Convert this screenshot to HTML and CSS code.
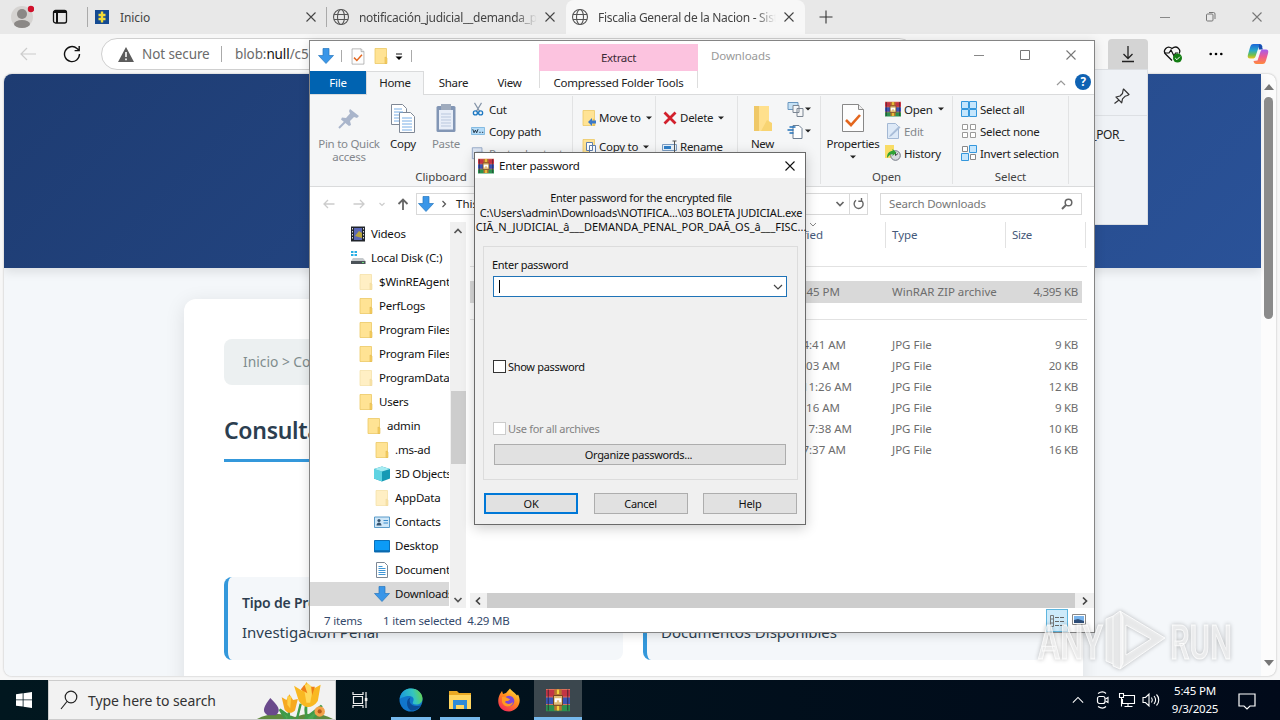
FILE: index.html
```html
<!DOCTYPE html>
<html lang="es">
  <head>
    <meta charset="UTF-8" />
    <title>Fiscalia General de la Nacion</title>
    <link rel="stylesheet" href="styles.css">
  </head>
  <body>
    <!-- shared icons -->
    <svg class="sprite">
      <symbol id="folder" viewBox="0 0 16 16">
        <path d="M2 .5h11.500v15H2z" fill="#ffe394" stroke="#ecc964" stroke-width=".8" />
        <path d="M12 9l2 1v5.500h-2z" fill="#f7cf62" stroke="#e0b84f" stroke-width=".6" />
      </symbol>
      <symbol id="down" viewBox="0 0 16 16">
        <path d="M5 .5h6v7h4.500L8 15.500.5 7.500H5z" fill="#3a96e8" stroke="#2677bd" stroke-width=".7" />
      </symbol>
      <symbol id="rar" viewBox="0 0 16 16">
        <path d="M0 1h16v5H0z" fill="#c23545" />
        <path d="M0 6h16v5H0z" fill="#3a55b5" />
        <path d="M0 11h16v4.500H0z" fill="#2c9150" />
        <path d="M0 1h16M0 6h16M0 11h16" stroke="#e4755f" stroke-width=".6" />
        <path d="M1.500 1v14M14.500 1v14" stroke="#2b1b2b" stroke-width=".5" />
        <path d="M5.500 1h5v14h-5z" fill="#b8742f" />
        <path d="M5 5h6v6.500H5z" fill="#e0bd78" stroke="#6c3d1b" stroke-width=".6" />
        <path d="M6.500 9.500V7.500h3v2" fill="none" stroke="#fff" stroke-width="1.400" />
        <path d="M8 1v3M8 12v3" stroke="#f4d23c" stroke-width="1.500" />
      </symbol>
      <symbol id="globe" viewBox="0 0 18 18">
        <g fill="none" stroke="#555" stroke-width="1.100">
          <circle cx="9" cy="9" r="7.500" />
          <ellipse cx="9" cy="9" rx="3.500" ry="7.500" />
          <path d="M2 6.500h14M2 11.500h14" />
        </g>
      </symbol>
      <symbol id="close" viewBox="0 0 12 12">
        <path d="M1.500 1.500l9 9M10.500 1.500l-9 9" fill="none" stroke="currentColor" stroke-width="1.100" />
      </symbol>
      <symbol id="page-check" viewBox="0 0 24 30">
        <path d="M1.500 1.500h16l5 5v22h-21z" fill="#fdfdfd" stroke="#888" />
        <path d="M17.500 1.500v5h5" fill="#eee" stroke="#888" />
        <path d="M5 17l5 5L19 12" fill="none" stroke="#e3661e" stroke-width="2.600" />
      </symbol>
      <symbol id="caret" viewBox="0 0 6 4"><path d="M0 .5h6l-3 3z" fill="#222" /></symbol>
      <symbol id="chev" viewBox="0 0 12 12"><path d="M2.500 4l3.500 3.500L9.500 4" fill="none" stroke="currentColor" stroke-width="1.700" /></symbol>
    </svg>

    <div class="browser">
      <div class="tabstrip">
        <svg class="avatar" viewBox="0 0 24 24">
          <circle cx="12" cy="12" r="11" fill="#d5d3d1" />
          <circle cx="12" cy="9" r="5" fill="#8b8886" />
          <ellipse cx="12" cy="19" rx="8" ry="4" fill="#8b8886" />
          <circle cx="21" cy="4" r="3.200" fill="#d0112b" />
        </svg>
        <svg class="spaces" viewBox="0 0 16 16">
          <rect x="1.500" y="1.500" width="13" height="12.500" rx="2" fill="none" stroke="#111" stroke-width="1.300" />
          <path d="M1.500 3h13M5 3v11" stroke="#111" stroke-width="2" />
        </svg>
        <div class="tab first">
          <svg class="favicon" viewBox="0 0 14 14">
            <path d="M0 0h14v14H0z" fill="#144a92" />
            <path d="M7 1.500v11M3.500 5h7M3.500 9h7" stroke="#f3dc37" stroke-width="2.400" />
          </svg>
          <span class="tab-title">Inicio</span>
          <svg class="tab-close"><use href="#close" /></svg>
        </div>
        <div class="tab second">
          <svg class="globe"><use href="#globe" /></svg>
          <span class="tab-title faded">notificación_judicial__demanda_penal</span>
          <svg class="tab-close"><use href="#close" /></svg>
        </div>
        <div class="tab active">
          <svg class="globe"><use href="#globe" /></svg>
          <span class="tab-title faded">Fiscalia General de la Nacion - Sistema</span>
          <svg class="tab-close"><use href="#close" /></svg>
        </div>
        <svg class="new-tab" viewBox="0 0 14 14"><path d="M7 .5v13M.5 7h13" stroke="#333" stroke-width="1.100" /></svg>
        <div class="win-controls">
          <svg viewBox="0 0 12 12"><path d="M1 6.500h10" stroke="#888" /></svg>
          <svg viewBox="0 0 12 12"><path d="M1.500 4a1 1 0 0 1 1-1H7a1 1 0 0 1 1 1v5a1 1 0 0 1-1 1H2.500a1 1 0 0 1-1-1zM4 1.500h4.500a1.500 1.500 0 0 1 1.500 1.500v5" fill="none" stroke="#777" /></svg>
          <svg class="grey"><use href="#close" /></svg>
        </div>
      </div>

      <div class="toolbar">
        <svg class="back" viewBox="0 0 18 14"><path d="M17 7H2M8 1L2 7l6 6" fill="none" stroke="#ccc" stroke-width="1.200" /></svg>
        <svg class="reload" viewBox="0 0 18 18"><path d="M16.500 9A7.500 7.500 0 1 1 14 3.500L16 5.300M16.200 1v4.600h-4.600" fill="none" stroke="#111" stroke-width="1.400" /></svg>
        <div class="url">
          <svg class="warn" viewBox="0 0 16 15"><path d="M8 0l8 15H0z" fill="#5c5c5c" /><path d="M8 5v5M8 11.500v1.700" stroke="#fff" stroke-width="1.600" /></svg>
          <span class="secure">Not secure</span>
          <span class="blob">blob:<b>null</b>/c5</span>
        </div>
        <div class="tools">
          <div class="dl-button"><svg viewBox="0 0 14 18"><path d="M7 1v12M2.500 9L7 13.500 11.500 9M1 16.500h12" fill="none" stroke="#222" stroke-width="1.300" /></svg></div>
          <svg class="heart" viewBox="0 0 20 18">
            <path d="M9 15.500L2.500 9C-.5 5.500 4-.5 9 3.500c5-4 9.500 1.500 7 5" fill="none" stroke="#111" stroke-width="1.300" />
            <path d="M1 8h5l2-3 3 6 1.500-3H15" fill="none" stroke="#111" stroke-width="1.200" />
            <circle cx="14.500" cy="13" r="4.500" fill="#137d13" />
            <path d="M12.200 13l1.700 1.700 3-3" fill="none" stroke="#fff" />
          </svg>
          <svg class="dots" viewBox="0 0 14 4"><circle cx="1.700" cy="2" r="1.300" /><circle cx="7" cy="2" r="1.300" /><circle cx="12.300" cy="2" r="1.300" /></svg>
          <svg class="copilot" viewBox="0 0 22 22">
            <defs>
              <linearGradient id="cpA" x1="0" y1="0" x2="0" y2="1"><stop offset="0" stop-color="#1b65d8" /><stop offset=".45" stop-color="#28a9c9" /><stop offset=".75" stop-color="#6fc04f" /><stop offset="1" stop-color="#f0c31c" /></linearGradient>
              <linearGradient id="cpB" x1="0" y1="0" x2="0" y2="1"><stop offset="0" stop-color="#a25bf0" /><stop offset=".5" stop-color="#ed5a92" /><stop offset="1" stop-color="#ff8a3c" /></linearGradient>
            </defs>
            <path d="M6.500 1h6c2 0 2.500 1 3 3l-4 .500-3 9c-.5 1.500-1.300 2-3 2H3c-2 0-2.800-1.500-2-4l2-7C3.700 2 4.500 1 6.500 1z" fill="url(#cpA)" />
            <path d="M12 1.200c2 .3 2.800 1 3.300 3.300l.5 2h-4z" fill="#1c4cad" />
            <path d="M15.500 21h-6c-2 0-2.500-1-3-3l4-.500 3-9c.5-1.500 1.300-2 3-2H19c2 0 2.800 1.500 2 4l-2 7c-.700 2.500-1.500 3.500-3.500 3.500z" fill="url(#cpB)" />
          </svg>
        </div>
      </div>

      <div class="viewport">
        <div class="page">
          <div class="hero"></div>
          <div class="content">
            <div class="breadcrumb">Inicio &gt; Consulta</div>
            <h2>Consulta</h2>
            <div class="info-grid">
              <div class="info"><b>Tipo de Proceso</b><span>Investigación Penal</span></div>
              <div class="info"><b>&nbsp;</b><span>Documentos Disponibles</span></div>
            </div>
          </div>
        </div>
        <div class="page-scroll">
          <i class="tri up"></i>
          <div class="page-thumb"></div>
          <i class="tri"></i>
        </div>
      </div>
    </div>

    <div class="flyout">
      <div class="flyout-head">
        <svg viewBox="0 0 18 18"><path d="M10.500 2l5.500 5.500-1.500 1-2.500.8-2.500 2.500-.8 4L3 10l4-1 2.500-2.500L10 3.500zM6 13l-4.500 3.500" fill="none" stroke="#333" stroke-width="1.200" stroke-linejoin="round" /></svg>
      </div>
      <div class="flyout-file">_POR_</div>
    </div>

    <div class="explorer">
      <div class="ex-title">
        <div class="quick">
          <svg class="q-down"><use href="#down" /></svg>
          <i></i>
          <svg class="q-check"><use href="#page-check" /></svg>
          <svg class="q-folder"><use href="#folder" /></svg>
          <svg class="q-caret" viewBox="0 0 8 8"><path d="M1 1h6" stroke="#111" /><path d="M.5 3.500h7L4 7z" /></svg>
          <i></i>
        </div>
        <div class="ctx">Extract</div>
        <div class="ex-name">Downloads</div>
        <div class="ex-controls">
          <svg viewBox="0 0 12 12"><path d="M1 6.500h10" stroke="#888" /></svg>
          <svg viewBox="0 0 12 12"><path d="M1.500 1.500h9v9h-9z" fill="none" stroke="#777" /></svg>
          <svg class="grey"><use href="#close" /></svg>
        </div>
      </div>
      <div class="ex-tabs">
        <div class="t-file">File</div>
        <div class="t-home">Home</div>
        <div class="t-share">Share</div>
        <div class="t-view">View</div>
        <div class="t-ctx">Compressed Folder Tools</div>
        <svg class="t-up" viewBox="0 0 10 6"><path d="M1 5l4-4 4 4" fill="none" stroke="#999" stroke-width="1.200" /></svg>
        <div class="help">?</div>
      </div>

      <div class="ribbon">
        <div class="group g-clip">
          <div class="cols">
            <div class="big pin off">
              <svg viewBox="0 0 24 30"><path d="M13 6l9 7-2 2-3-1-4 4 1 4-2 1-8-6.500 1-2 4 .5 4-4.500-1-2.500z" fill="#a9b5cb" /><path d="M8 19l-6 6" stroke="#a9b5cb" stroke-width="2" /></svg>
              Pin to Quick<br>access
            </div>
            <div class="big copy">
              <svg viewBox="0 0 24 30"><g stroke="#7f8896" fill="#fff"><path d="M.5 1.500h11l4 4v16H.5z" /><path d="M8.500 9.500h11l4 4v16h-15z" /></g><path d="M3 6h8M3 9h9M3 12h5M3 15h5M3 18h5M11 15h10M11 18h10M11 21h10M11 24h10M11 27h10" stroke="#79aee6" /></svg>
              Copy
            </div>
            <div class="big paste off">
              <svg viewBox="0 0 24 30"><rect x="2.500" y="3" width="19" height="26" rx="1.500" fill="#8296b5" /><path d="M5 7h14v19.500H5z" fill="#e8eef8" /><path d="M7 1h10v6H7z" fill="#9fabbd" /><path d="M7 11h10M7 14h10M7 17h10M7 20h10M7 23h10" stroke="#b9c7dd" /></svg>
              Paste
            </div>
            <div class="small-list">
              <div><svg viewBox="0 0 16 16"><path d="M4 1l6 10M12 1L6 11" stroke="#8494a8" stroke-width="1.300" /><g fill="none" stroke="#1d78c2" stroke-width="1.500"><circle cx="5" cy="12.500" r="2.300" /><circle cx="11" cy="12.500" r="2.300" /></g></svg>Cut</div>
              <div><svg viewBox="0 0 16 16"><path d="M.5 4h15v8H.5z" fill="#b5dcf8" stroke="#78b4df" /><path d="M2 6l1.500 4L5 7l1.500 3L8 6M9.500 9.500H11M12.500 9.500H14" fill="none" stroke="#123" /></svg>Copy path</div>
              <div class="off"><svg viewBox="0 0 16 16"><path d="M1.500 2h11v12.500h-11z" fill="#dfe7f4" stroke="#8fa3c4" /><path d="M6 7h8v8H6z" fill="#fff" stroke="#8fa3c4" /></svg>Paste shortcut</div>
            </div>
          </div>
          <div class="g-label">Clipboard</div>
        </div>
        <div class="group g-org">
          <div class="cols">
            <div class="mid-list">
              <div><svg viewBox="0 0 16 16"><use href="#folder" width="16" height="16" /><path d="M7 12l4-4v2.500h4v3h-4V16z" fill="#3a78c9" /></svg>Move to<svg class="caret"><use href="#caret" /></svg></div>
              <div><svg viewBox="0 0 16 16"><use href="#folder" width="16" height="16" /><path d="M5.500 3.500h6v8h-6zM8.500 6.500h6v8h-6z" fill="#fff" stroke="#5f7fae" /></svg>Copy to<svg class="caret"><use href="#caret" /></svg></div>
            </div>
            <div class="mid-list second-list">
              <div><svg viewBox="0 0 16 16"><path d="M2.500 2.500l11 11M13.500 2.500l-11 11" stroke="#d2202c" stroke-width="2.800" /></svg>Delete<svg class="caret"><use href="#caret" /></svg></div>
              <div><svg viewBox="0 0 16 16"><path d="M.5 5.500h14v6H.5z" fill="#e6f1fb" stroke="#7a9cc2" /><path d="M2 7h7v3H2z" fill="#2f7fc8" /><path d="M12.500 2v12M10.500 2h4M10.500 14h4" stroke="#555" /></svg>Rename</div>
            </div>
          </div>
        </div>
        <div class="group g-new">
          <div class="cols">
            <div class="big new">
              <svg viewBox="0 0 24 30"><path d="M3 3h15v25H3z" fill="#ffe08d" /><path d="M3 3h5v25H3z" fill="#efc867" /><path d="M16 17l5 3v8H10z" fill="#f8d472" /></svg>
              New
            </div>
            <div class="small-list">
              <div><svg viewBox="0 0 16 16"><path d="M.5 1.500h10v7H.5z" fill="#c5e1f5" stroke="#6a97bf" /><path d="M5.500 4.500h6v7h-6zM9.500 7.500h6v8h-6z" fill="#f5f6f7" stroke="#7b8592" /></svg><svg class="caret"><use href="#caret" /></svg></div>
              <div><svg viewBox="0 0 16 16"><path d="M5.500 2.500h6l3 3v10h-9z" fill="#fff" stroke="#6f7f92" /><path d="M2 4h6M0 7h6M2 10h4" stroke="#2272b9" stroke-width="1.300" /></svg><svg class="caret"><use href="#caret" /></svg></div>
            </div>
          </div>
        </div>
        <div class="group g-open">
          <div class="cols">
            <div class="big props">
              <svg><use href="#page-check" /></svg>
              Properties
              <svg class="caret"><use href="#caret" /></svg>
            </div>
            <div class="small-list">
              <div><svg><use href="#rar" /></svg>Open<svg class="caret"><use href="#caret" /></svg></div>
              <div class="off"><svg viewBox="0 0 16 16"><path d="M2.500 .5h8l3 3v12h-11z" fill="#dde9f7" stroke="#a3b8d4" /><path d="M5 12l9-9 1.500 1.500-9 8.500-2.500 1z" fill="#a9bdd8" /></svg>Edit</div>
              <div><svg viewBox="0 0 16 16"><path d="M0 0h9v13H0z" fill="#f9dc65" /><circle cx="10.500" cy="10.500" r="4.800" fill="#d7dbe0" stroke="#6f7680" /><path d="M10.500 7v3.500l2.500-2" fill="none" stroke="#444" /><path d="M2 13c0-5 2.500-7 5.500-7V4l4 3.500-4 3.500V9C5 9 4 11 2 13z" fill="#2fa336" /></svg>History</div>
            </div>
          </div>
          <div class="g-label">Open</div>
        </div>
        <div class="group g-select">
          <div class="cols">
            <div class="small-list">
              <div><svg viewBox="0 0 16 16"><path d="M.5 .5h7v7h-7zM8.500 .5h7v7h-7zM.5 8.500h7v7h-7zM8.500 8.500h7v7h-7z" fill="#c5e6fd" stroke="#3497dc" /></svg>Select all</div>
              <div><svg viewBox="0 0 16 16"><path d="M1.500 1.500h5v5h-5zM9.500 1.500h5v5h-5zM1.500 9.500h5v5h-5zM9.500 9.500h5v5h-5z" fill="#fff" stroke="#999" /></svg>Select none</div>
              <div><svg viewBox="0 0 16 16"><path d="M1.500 1.500h5v5h-5zM9.500 9.500h5v5h-5z" fill="#fff" stroke="#888" /><path d="M8.500 .5h7v7h-7zM.5 8.500h7v7h-7z" fill="#c5e6fd" stroke="#3497dc" /></svg>Invert selection</div>
            </div>
          </div>
          <div class="g-label">Select</div>
        </div>
      </div>

      <div class="nav-row">
        <svg class="n1" viewBox="0 0 12 10"><path d="M11.500 5H1M5 1L1 5l4 4" fill="none" stroke="#ccc" stroke-width="1.300" /></svg>
        <svg class="n2" viewBox="0 0 12 10"><path d="M.5 5H11M7 1l4 4-4 4" fill="none" stroke="#ccc" stroke-width="1.300" /></svg>
        <svg class="n3" viewBox="0 0 12 12"><path d="M3.500 5L6 7.500 8.500 5" fill="none" stroke="#ccc" stroke-width="1.200" /></svg>
        <svg class="n4" viewBox="0 0 12 12"><path d="M6 12V1.500M1.500 6L6 1.500 10.500 6" fill="none" stroke="#666" stroke-width="1.800" /></svg>
        <div class="address">
          <svg class="q-down"><use href="#down" /></svg>
          <svg class="right-chev" viewBox="0 0 6 8"><path d="M1.500 1L4.500 4l-3 3" fill="none" stroke="#555" stroke-width="1.200" /></svg>
          <span>This PC</span>
          <svg class="drop"><use href="#chev" /></svg>
          <svg class="refresh" viewBox="0 0 12 12"><path d="M9 2.500A4.500 4.500 0 1 1 3.500 2.300M9 0v3.300H5.800" fill="none" stroke="#666" stroke-width="1.400" /></svg>
        </div>
        <div class="search"><span>Search Downloads</span>
          <svg viewBox="0 0 12 12"><circle cx="7.500" cy="4.500" r="3.300" fill="none" stroke="#666" stroke-width="1.500" /><path d="M5 7L1 11" stroke="#666" stroke-width="2" /></svg>
        </div>
      </div>

      <div class="ex-body">
        <div class="tree">
          <div class="l1"><svg viewBox="0 0 16 16"><path d="M1 .5h14v15H1z" fill="#20242b" /><path d="M4 2h8v12H4z" fill="#5a67b5" /><path d="M5 10l4-5 3 2v5z" fill="#b8a53c" /><path d="M2.500 2v12M13.500 2v12" stroke="#ddd" stroke-dasharray="1.500 1.500" /></svg><span>Videos</span></div>
          <div class="l1"><svg viewBox="0 0 16 16"><path d="M1 1h2.500v2H1zM4.500 1H7v2H4.500zM1 4h2.500v2H1zM4.500 4H7v2H4.500z" fill="#27aee4" /><path d="M3 8h10l2.500 3H1z" fill="#c5c9cc" /><path d="M1 11h14.500v3H1z" fill="#4b5258" /><path d="M12 12.500h2" stroke="#6be07a" /></svg><span>Local Disk (C:)</span></div>
          <div class="l2 hid"><svg><use href="#folder" /></svg><span>$WinREAgent</span></div>
          <div class="l2"><svg><use href="#folder" /></svg><span>PerfLogs</span></div>
          <div class="l2"><svg><use href="#folder" /></svg><span>Program Files</span></div>
          <div class="l2"><svg><use href="#folder" /></svg><span>Program Files</span></div>
          <div class="l2 hid"><svg><use href="#folder" /></svg><span>ProgramData</span></div>
          <div class="l2"><svg><use href="#folder" /></svg><span>Users</span></div>
          <div class="l3"><svg><use href="#folder" /></svg><span>admin</span></div>
          <div class="l4"><svg><use href="#folder" /></svg><span>.ms-ad</span></div>
          <div class="l4"><svg viewBox="0 0 16 16"><path d="M0 3l8-2.500L16 3v9.500l-8 3-8-3z" fill="#179ab5" /><path d="M0 3l8 2.500v10l-8-3z" fill="#5fd3e2" /><path d="M0 3L8 .5 16 3 8 5.500z" fill="#a5ecf2" /></svg><span>3D Objects</span></div>
          <div class="l4 hid"><svg><use href="#folder" /></svg><span>AppData</span></div>
          <div class="l4"><svg viewBox="0 0 16 16"><path d="M.5 3h15v10.500H.5z" fill="#cfe7f8" stroke="#5a9bc9" /><circle cx="5" cy="6.500" r="1.600" fill="#35536e" /><path d="M2.500 11.500c0-4 5-4 5 0z" fill="#35536e" /><path d="M9.500 6.500h4.500M9.500 9h4.500" stroke="#3a8ccc" /></svg><span>Contacts</span></div>
          <div class="l4"><svg viewBox="0 0 16 16"><path d="M.5 2.500h15v11.500H.5z" fill="#0c9bf7" stroke="#0a6fb8" /><path d="M1 13h14" stroke="#0a4d80" /></svg><span>Desktop</span></div>
          <div class="l4"><svg viewBox="0 0 16 16"><path d="M2.500 .5h8l3 3v12h-11z" fill="#fff" stroke="#7c8794" /><path d="M4.500 4.500h4M4.500 6.500h7M4.500 8.500h7M4.500 10.500h7M4.500 12.500h7" stroke="#3f96d6" /></svg><span>Documents</span></div>
          <div class="l4 sel"><svg><use href="#down" /></svg><span>Downloads</span></div>
        </div>
        <div class="tree-scroll">
          <svg class="flip"><use href="#chev" /></svg>
          <div class="tree-thumb"></div>
          <svg><use href="#chev" /></svg>
        </div>
        <div class="files">
          <div class="frow head"><span class="e0">Date modified</span><span>Type</span><span>Size</span></div>
          <div class="rule"></div>
          <div class="frow picked"><span class="e1">45 PM</span><span>WinRAR ZIP archive</span><span>4,395 KB</span></div>
          <div class="rule second-rule"></div>
          <div class="frow"><span class="e2">4:41 AM</span><span>JPG File</span><span>9 KB</span></div>
          <div class="frow"><span class="e1">03 AM</span><span>JPG File</span><span>20 KB</span></div>
          <div class="frow"><span class="e3">11:26 AM</span><span>JPG File</span><span>12 KB</span></div>
          <div class="frow"><span class="e1">16 AM</span><span>JPG File</span><span>9 KB</span></div>
          <div class="frow"><span class="e3">7:38 AM</span><span>JPG File</span><span>10 KB</span></div>
          <div class="frow"><span class="e2">7:37 AM</span><span>JPG File</span><span>16 KB</span></div>
          <svg class="sort" viewBox="0 0 8 5"><path d="M1 1l3 3 3-3" fill="none" stroke="#888" /></svg>
          <div class="h-scroll">
            <svg class="turn-left"><use href="#chev" /></svg>
            <div class="h-thumb"></div>
            <svg class="turn-right"><use href="#chev" /></svg>
          </div>
        </div>
      </div>
      <div class="status">
        <span>7 items</span><span>1 item selected&nbsp; 4.29 MB</span>
        <div class="view-btn on"><svg viewBox="0 0 16 14"><path d="M1.500 1.500h3v11h-3zM1.500 5h3M1.500 9h3" fill="none" stroke="#777" /><path d="M6 3.500h10M6 7.500h10M6 11.500h10" stroke="#666" stroke-dasharray="4 1" /></svg></div>
        <div class="view-btn"><svg viewBox="0 0 14 12"><path d="M.5 .5h13v10H.5z" fill="#fff" stroke="#888" /><path d="M2 2h10v7H2z" fill="#79b4ec" /><path d="M2 9V6l4-1 6 2v2z" fill="#2f4f7a" /></svg></div>
      </div>
    </div>

    <div class="dialog">
      <div class="dlg-title">
        <svg><use href="#rar" /></svg>
        <span>Enter password</span>
        <svg class="dlg-close"><use href="#close" /></svg>
      </div>
      <div class="dlg-msg">
        <p class="m1">Enter password for the encrypted file</p>
        <p class="m2">C:\Users\admin\Downloads\NOTIFICA...\03 BOLETA JUDICIAL.exe</p>
        <p class="m3">CIÃ_N_JUDICIAL_â___DEMANDA_PENAL_POR_DAÃ_OS_â___FISC...</p>
      </div>
      <div class="fieldset">
        <label>Enter password</label>
        <div class="combo"><i></i><svg viewBox="0 0 12 12"><path d="M2 4l4 4 4-4" fill="none" stroke="#444" stroke-width="1.200" /></svg></div>
        <div class="check"><i></i>Show password</div>
        <div class="check disabled"><i></i>Use for all archives</div>
        <div class="btn wide">Organize passwords...</div>
      </div>
      <div class="dlg-buttons">
        <div class="btn primary">OK</div>
        <div class="btn">Cancel</div>
        <div class="btn">Help</div>
      </div>
    </div>

    <svg class="watermark" viewBox="0 0 204 70">
      <g class="mark">
        <text x="4" y="53" textLength="65" lengthAdjust="spacingAndGlyphs">ANY</text>
        <text x="136" y="53" textLength="62" lengthAdjust="spacingAndGlyphs">RUN</text>
        <path d="M86 5l45 27-45 31-7-3V10zM92 19v30l25-16z" />
        <path d="M86 5l3 6v46l-3 6M79 10l-7 3v42l7 3" />
      </g>
    </svg>

    <div class="taskbar">
      <svg class="start" viewBox="0 0 16 16"><path d="M0 2.300L6.700 1.300v6.200H0zM7.500 1.200L16 0v7.500H7.500zM0 8.300h6.700v6.300L0 13.700zM7.500 8.300H16V16l-8.500-1.200z" fill="#fff" /></svg>
      <div class="tb-search">
        <svg class="lens" viewBox="0 0 18 20"><circle cx="11" cy="7" r="5.800" fill="none" stroke="#222" stroke-width="1.200" /><path d="M7 11.500L1 19" stroke="#222" stroke-width="1.200" /></svg>
        Type here to search
        <svg class="flowers" viewBox="0 0 80 40">
          <path d="M0 40c12-7 30-6 40-2 12-5 28-5 40 2z" fill="#5f8a3d" />
          <path d="M33 40c1-6 1-10 0-15M53 40c-3-8-2-13 0-20M38 40l-14-10 6 10M50 40l18-14-8 14M42 40l4-16" stroke="#3f9a48" stroke-width="2.500" fill="#4ba650" />
          <path d="M14 18c8 8 12 13 6 18h-9c-7-4-3-10 3-18z" fill="#6a4a8c" />
          <path d="M26 17l5 3 3-6 4 6 5-1-3 12c-4 4-8 3-11-1z" fill="#f6a91f" />
          <path d="M32 16l4 0-1 13-3-4z" fill="#ffcf45" />
          <path d="M39 5l8 5 5-9 6 8 9-5-3 17c-6 9-15 8-20 0z" fill="#f9b822" />
          <path d="M49 5l5-2 5 4-3 16h-4z" fill="#ffd95b" />
          <path d="M46 9l4-5 3 9zM57 6l4 0-3 9z" fill="#ee7e16" />
          <circle cx="66" cy="32" r="5.500" fill="#f3a24a" />
          <circle cx="66" cy="32" r="2.200" fill="#b65b19" />
        </svg>
      </div>
      <svg class="taskview" viewBox="0 0 16 18"><path d="M1 1v2.500h10V1M1 17v-2.500h10V17M1.500 5.500h9v7h-9zM14 1v16" fill="none" stroke="#eee" stroke-width="1.200" /><path d="M12.800 7h2.600v3h-2.600z" fill="#eee" /></svg>
      <div class="app edge open">
        <svg viewBox="0 0 24 24">
          <defs><linearGradient id="edgeTop" x1="0" y1=".5" x2="1" y2=".3"><stop offset="0" stop-color="#1997dc" /><stop offset=".6" stop-color="#34c4c0" /><stop offset="1" stop-color="#67d34b" /></linearGradient></defs>
          <circle cx="12" cy="12" r="11.500" fill="#1176cb" />
          <path d="M.7 11C2 3 7 .5 12 .5c7 0 11.500 5 11.500 10 0 4-3 6-6.500 6-3 0-4-1-3-2.500 2-4-1-6-4-6-4 0-8 2-9.300 3z" fill="url(#edgeTop)" />
          <path d="M8 15c0-3 1.500-5 3.500-5.500-2.500 4 .5 9 6.500 8.500 2 0 3.500-.5 4-1-3 5-8 6-10 5.500-2-1-4-3.500-4-7.500z" fill="#0b4b96" />
        </svg>
      </div>
      <div class="app open">
        <svg viewBox="0 0 24 24"><path d="M1 3h8l2 2h12v6H1z" fill="#e9a924" /><path d="M1 7h22v14H1z" fill="#ffd661" /><path d="M5 12h14v9h-3v-4H8v4H5z" fill="#2f8ad6" /></svg>
      </div>
      <div class="app">
        <svg viewBox="0 0 24 24">
          <defs><linearGradient id="fox" x1=".8" y1="0" x2=".2" y2="1"><stop offset="0" stop-color="#ffdf3c" /><stop offset=".45" stop-color="#ff8a1d" /><stop offset="1" stop-color="#f5245b" /></linearGradient></defs>
          <path d="M3 6l2-3 1 3 3-1 4-4.500c1 2 5 4 7 7l1-1c5 9-2 17-9 17C3 23.500-1.500 15 3 6z" fill="url(#fox)" />
          <circle cx="12" cy="13" r="5.300" fill="#7b46d8" />
          <path d="M5 9c4-1 5 2 8 2-1 3-4 1-5 3 1 2 5 3 8 0-1 6-9 6-11 0z" fill="#ff9a22" />
        </svg>
      </div>
      <div class="app current open"><svg><use href="#rar" /></svg></div>
      <div class="tray">
        <svg class="tr1" viewBox="0 0 14 8"><path d="M1 7l6-6 6 6" fill="none" stroke="#fff" stroke-width="1.200" /></svg>
        <svg class="tr2" viewBox="0 0 14 18"><rect x="1.500" y="5.500" width="7.500" height="7" rx="2" fill="none" stroke="#fff" stroke-width="1.200" /><path d="M9.500 8l2.500-1.500v5L9.500 10M2 2.500c3-2 6-2 8 0M2 15.500c3 2 6 2 8 0" fill="none" stroke="#fff" stroke-width="1.100" /></svg>
        <svg class="tr3" viewBox="0 0 18 16"><path d="M5 3.500h11.500v8H4.500V7M10 11.500V14M6.500 14.500h8M1.500 1.500h4v4h-4zM3.500 5.500v9" fill="none" stroke="#fff" stroke-width="1.100" /></svg>
        <svg class="tr4" viewBox="0 0 18 16"><path d="M1 5.500h2.500L7 2v12L3.500 10.500H1zM9.500 5.500c1 1.500 1 3.500 0 5M12 4c2 2.500 2 5.500 0 8M14.500 2.500c3 3 3 8 0 11" fill="none" stroke="#fff" stroke-width="1.100" /></svg>
        <div class="clock">5:45 PM<br>9/3/2025</div>
        <svg class="tr5" viewBox="0 0 18 17"><path d="M1 1h16v12h-5l-3 3-3-3H1z" fill="none" stroke="#fff" stroke-width="1.200" /></svg>
      </div>
    </div>
  </body>
</html>
```
FILE: styles.css
```css
* {
  box-sizing: border-box;
}

body {
  margin: 0;
  width: 1280px;
  height: 720px;
  overflow: hidden;
  font-family: "Noto Sans", "Open Sans", sans-serif;
  font-size: 12px;
  color: #222;
  background: #f7f7f7;
}

svg {
  display: block;
  flex: none;
}

.sprite {
  display: none;
}

.grey {
  color: #777;
}

/* browser */

.browser {
  height: 680px;
  display: flex;
  flex-direction: column;
}

.tabstrip {
  height: 34px;
  background: #e8e8e8;
  display: flex;
  align-items: center;
}

.avatar {
  width: 24px;
  height: 24px;
  margin-left: 10px;
}

.spaces {
  width: 16px;
  height: 16px;
  margin: 0 19px 0 18px;
}

.tab {
  height: 34px;
  display: flex;
  align-items: center;
  font-size: 12px;
  color: #444;
  letter-spacing: -0.3px;
}

.tab.first {
  width: 239px;
  height: 20px;
  border-left: 1px solid #aaa;
  padding-left: 7px;
  letter-spacing: -0.1px;
}

.tab.second {
  width: 240px;
  height: 20px;
  border-left: 1px solid #aaa;
  padding-left: 5px;
}

.tab.active {
  width: 239px;
  background: #f7f7f7;
  border-radius: 8px 8px 0 0;
  padding-left: 5px;
}

.favicon {
  width: 14px;
  height: 14px;
  margin-right: 11px;
}

.globe {
  width: 18px;
  height: 18px;
  margin-right: 9px;
}

.tab-title {
  width: 178px;
  margin-right: 7px;
  white-space: nowrap;
  overflow: hidden;
}

.faded {
  -webkit-mask-image: linear-gradient(90deg, #000 88%, transparent);
  mask-image: linear-gradient(90deg, #000 88%, transparent);
}

.tab-close {
  width: 12px;
  height: 12px;
}

.new-tab {
  width: 14px;
  height: 14px;
  margin-left: 14px;
}

.win-controls {
  margin-left: auto;
  margin-right: 17px;
  display: flex;
  gap: 34px;
}

.win-controls svg,
.ex-controls svg {
  width: 12px;
  height: 12px;
}

.toolbar {
  height: 40px;
  display: flex;
  align-items: center;
  background: #f7f7f7;
}

.back {
  width: 18px;
  height: 14px;
  margin: 0 25px 0 19px;
}

.reload {
  width: 18px;
  height: 18px;
  margin-left: 1px;
}

.url {
  width: 814px;
  height: 32px;
  margin-left: 20px;
  border: 1px solid #cfcfcf;
  border-radius: 16px;
  background: #fff;
  display: flex;
  align-items: center;
  padding-left: 16px;
  font-size: 13.5px;
  color: #6b6b6b;
}

.warn {
  width: 16px;
  height: 15px;
  margin-right: 8px;
}

.secure {
  width: 80px;
  margin-right: 13px;
  border-right: 1px solid #aaa;
  line-height: 16px;
  letter-spacing: -0.1px;
}

.blob {
  letter-spacing: -0.1px;
}

.blob b {
  font-weight: normal;
  color: #111;
}

.tools {
  margin-left: auto;
  margin-right: 11px;
  display: flex;
  align-items: center;
}

.dl-button {
  width: 40px;
  height: 30px;
  background: #d4d4d4;
  border-radius: 4px 4px 0 0;
  display: flex;
  align-items: center;
  justify-content: center;
}

.dl-button svg {
  width: 14px;
  height: 18px;
}

.heart {
  width: 20px;
  height: 18px;
  margin: 0 26px 0 15px;
}

.dots {
  width: 14px;
  height: 4px;
  margin-right: 24px;
}

.copilot {
  width: 22px;
  height: 22px;
}

.viewport {
  margin: 0 4px 4px;
  height: 602px;
  display: flex;
  border-radius: 8px;
  overflow: hidden;
  background: #fcfcfc;
  box-shadow: 0 0 2px #aaa;
}

.page {
  width: 1257px;
  background: #f4f7fa;
}

.hero {
  height: 194px;
  background: linear-gradient(135deg, #1e3c72 0%, #2a5298 100%);
  box-shadow: 0 4px 10px rgba(0, 0, 0, 0.1);
}

.content {
  width: 899px;
  height: 500px;
  margin: 31px 0 0 180px;
  padding: 40px;
  background: #fff;
  border-radius: 12px;
  box-shadow: 0 4px 20px rgba(0, 0, 0, 0.1);
  color: #2c3e50;
}

.breadcrumb {
  height: 46px;
  padding-left: 19px;
  background: #ecf0f1;
  border-radius: 8px;
  line-height: 46px;
  font-size: 13.8px;
  color: #7f8c8d;
}

h2 {
  margin: 27px 0 0;
  height: 50px;
  border-bottom: 3px solid #3498db;
  font-size: 23px;
  font-weight: 600;
  line-height: 37px;
  letter-spacing: -0.3px;
}

.info-grid {
  margin-top: 115px;
  display: grid;
  grid-template-columns: 399px 400px;
  gap: 20px;
}

.info {
  height: 83px;
  border-left: 4px solid #3498db;
  border-radius: 8px;
  background: #f4f7fa;
  padding: 12px 14px;
  display: flex;
  flex-direction: column;
}

.info b {
  font-size: 14px;
  font-weight: 600;
  line-height: 28px;
  letter-spacing: -0.2px;
}

.info span {
  font-size: 15px;
  line-height: 31px;
}

.page-scroll {
  width: 15px;
  display: flex;
  flex-direction: column;
  align-items: center;
  padding: 10px 0;
}

.tri {
  border: 5px solid transparent;
  border-top: 6px solid #777;
  border-bottom: 0;
  margin-top: auto;
}

.tri.up {
  border-top: 0;
  border-bottom: 6px solid #777;
  margin: 0;
}

.page-thumb {
  width: 9px;
  height: 222px;
  margin-top: 7px;
  border-radius: 5px;
  background: #8b8b8b;
}

/* downloads flyout, mostly behind the explorer window */

.flyout {
  position: absolute;
  left: 1000px;
  top: 69px;
  width: 148px;
  height: 156px;
  background: #eff2f6;
  border: 1px solid #dcdfe3;
}

.flyout-head {
  height: 46px;
  border-bottom: 1px solid #dde0e4;
  padding: 17px 0 0 112px;
}

.flyout-head svg {
  width: 18px;
  height: 18px;
}

.flyout-file {
  text-align: right;
  padding: 10px 23px 0 0;
  font-size: 12px;
  letter-spacing: -0.4px;
}

/* file explorer */

.explorer {
  position: absolute;
  left: 309px;
  top: 40px;
  width: 786px;
  height: 593px;
  background: #fff;
  border: 1px solid #858585;
  box-shadow: 0 2px 10px rgba(0, 0, 0, 0.15);
  font-size: 11.5px;
}

.ex-title {
  height: 30px;
  display: flex;
}

.quick {
  width: 229px;
  padding-left: 8px;
  display: flex;
  align-items: center;
}

.quick i {
  width: 1px;
  height: 12px;
  background: #aaa;
}

.q-down {
  width: 16px;
  height: 16px;
}

.quick .q-down {
  margin-right: 7px;
}

.q-check {
  width: 14px;
  height: 17px;
  margin: 0 8px 0 9px;
}

.q-folder {
  width: 16px;
  height: 16px;
}

.q-caret {
  width: 8px;
  height: 8px;
  margin: 2px 8px 0 6px;
}

.ctx {
  width: 159px;
  height: 27px;
  margin-top: 3px;
  background: #fcc3df;
  text-align: center;
  line-height: 28px;
  letter-spacing: -0.3px;
  color: #3c2b36;
}

.ex-name {
  padding-left: 13px;
  line-height: 30px;
  letter-spacing: -0.1px;
  color: #999;
}

.ex-controls {
  margin: 8px 17px 0 auto;
  display: flex;
  gap: 34px;
}

.ex-tabs {
  height: 24px;
  display: flex;
  line-height: 24px;
  letter-spacing: -0.25px;
  text-align: center;
  border-bottom: 1px solid #dadbdc;
}

.t-file {
  width: 56px;
  height: 23px;
  background: #0063b1;
  color: #fff;
}

.t-home {
  width: 58px;
  height: 24px;
  background: #f5f6f7;
  border: 1px solid #dadbdc;
  border-bottom: 0;
  line-height: 22px;
}

.t-share {
  width: 59px;
}

.t-view {
  width: 53px;
}

.t-ctx {
  width: 159px;
  margin-left: 3px;
  height: 17px;
  border: solid #ddd;
  border-width: 0 1px;
  white-space: nowrap;
}

.t-up {
  width: 10px;
  height: 6px;
  margin: 9px 9px 0 auto;
}

.help {
  width: 16px;
  height: 16px;
  margin: 3px 3px 0 0;
  border-radius: 50%;
  background: #0f62b3;
  color: #fff;
  font-weight: bold;
  line-height: 16px;
}

.ribbon {
  height: 92px;
  display: flex;
  background: #f5f6f7;
  border-bottom: 1px solid #dadbdc;
  letter-spacing: -0.28px;
}

.group {
  position: relative;
  border-right: 1px solid #e2e3e4;
  height: 88px;
  margin-top: 1px;
}

.cols {
  display: flex;
  height: 73px;
}

.g-label {
  text-align: center;
  line-height: 16px;
  letter-spacing: -0.1px;
  color: #444;
}

.g-clip {
  width: 263px;
}

.g-org {
  width: 165px;
}

.g-new {
  width: 83px;
}

.g-open {
  width: 132px;
}

.g-select {
  width: 116px;
}

.big {
  display: flex;
  flex-direction: column;
  align-items: center;
  text-align: center;
  line-height: 13px;
  padding-top: 7px;
}

.big svg {
  width: 24px;
  height: 30px;
  margin-bottom: 4px;
}

.off {
  color: #83878c;
}

.pin {
  width: 78px;
}

.copy {
  width: 30px;
}

.paste {
  width: 50px;
  margin-left: 3px;
}

.new {
  width: 49px;
}

.props {
  width: 64px;
}

.caret,
.big .caret {
  width: 6px;
  height: 4px;
  margin-left: 5px;
}

.big .caret {
  margin: 5px 0 0;
}

.small-list > div {
  height: 22px;
  display: flex;
  align-items: center;
  white-space: nowrap;
}

.small-list {
  padding-top: 2px;
}

.small-list svg:not(.caret) {
  width: 14px;
  height: 16px;
  margin-right: 4px;
}

.g-new .small-list svg:not(.caret) {
  width: 17px;
  margin-right: 0;
}

.g-new .caret {
  margin-left: 1px;
}

.g-open .small-list svg:not(.caret),
.g-select .small-list svg:not(.caret) {
  width: 16px;
  margin-right: 3px;
}

.g-select .small-list {
  padding-left: 8px;
}

.mid-list {
  width: 85px;
  padding: 7px 0 0 8px;
}

.mid-list > div {
  height: 29px;
  display: flex;
  align-items: center;
  white-space: nowrap;
}

.mid-list svg:not(.caret) {
  width: 16px;
  height: 16px;
  margin-right: 2px;
}

.second-list {
  border-left: 1px solid #e2e3e4;
  padding-left: 6px;
}

.nav-row {
  height: 35px;
  display: flex;
  align-items: center;
  padding-bottom: 2px;
}

.n1,
.n2 {
  width: 12px;
  height: 10px;
}

.n1 {
  margin-left: 13px;
}

.n2 {
  margin-left: 18px;
}

.n3 {
  width: 12px;
  height: 12px;
  margin-left: 11px;
}

.n4 {
  width: 12px;
  height: 12px;
  margin-left: 9px;
}

.address {
  width: 452px;
  height: 22px;
  margin-left: 7px;
  border: 1px solid #d9d9d9;
  display: flex;
  align-items: center;
  padding-left: 1px;
}

.right-chev {
  width: 6px;
  height: 8px;
  margin: 0 9px 0 7px;
}

.drop {
  width: 12px;
  height: 12px;
  margin-left: auto;
  color: #666;
}

.refresh {
  width: 18px;
  height: 20px;
  padding: 4px 2px;
  margin-left: 3px;
  border-left: 1px solid #d9d9d9;
}

.search {
  width: 202px;
  height: 22px;
  margin-left: 12px;
  border: 1px solid #d9d9d9;
  padding: 0 8px;
  color: #777;
  letter-spacing: -0.18px;
  display: flex;
  align-items: center;
  justify-content: space-between;
}

.search svg {
  width: 12px;
  height: 12px;
}

.ex-body {
  height: 386px;
  display: flex;
}

.tree {
  width: 139px;
  overflow: hidden;
  color: #111;
  letter-spacing: -0.2px;
}

.tree div {
  height: 24px;
  display: flex;
  align-items: center;
  white-space: nowrap;
}

.tree span {
  padding-bottom: 1px;
}

.tree svg {
  width: 16px;
  height: 16px;
  margin-right: 5px;
}

.tree .l1 {
  padding-left: 40px;
}

.tree .l2 {
  padding-left: 48px;
}

.tree .l3 {
  padding-left: 56px;
}

.tree .l4 {
  padding-left: 64px;
}

.tree .hid svg {
  opacity: 0.55;
}

.tree .sel {
  background: #d9d9d9;
}

.tree-scroll {
  width: 16px;
  margin-left: 1px;
  background: #f0f0f0;
  display: flex;
  flex-direction: column;
  align-items: center;
  padding: 3px 0 2px;
  color: #555;
}

.tree-scroll svg,
.h-scroll svg {
  width: 12px;
  height: 12px;
}

.flip {
  transform: rotate(180deg);
}

.turn-left {
  transform: rotate(90deg);
}

.turn-right {
  transform: rotate(-90deg);
}

.tree-thumb {
  width: 15px;
  height: 73px;
  margin: 154px 0 auto;
  background: #cdcdcd;
}

.files {
  position: relative;
  flex: 1;
  margin-left: 4px;
  display: flex;
  flex-direction: column;
  color: #6d6d6d;
}

.sort {
  position: absolute;
  left: 339px;
  top: 0;
  width: 8px;
  height: 5px;
}

.frow {
  height: 21px;
  width: 612px;
  display: grid;
  grid-template-columns: 415px 120px 77px;
  line-height: 21px;
  flex: none;
}

.frow span:nth-child(1) {
  text-align: right;
}

.frow span:nth-child(2) {
  padding-left: 7px;
}

.frow span:nth-child(3) {
  text-align: right;
  padding-right: 4px;
  letter-spacing: -0.3px;
}

.frow .e0 {
  padding-right: 62px;
}

.frow .e1 {
  padding-right: 45px;
}

.frow .e2 {
  padding-right: 39px;
}

.frow .e3 {
  padding-right: 33px;
}

.frow.head {
  width: 616px;
  grid-template-columns: 416px 120px 80px;
  height: 26px;
  line-height: 26px;
  color: #45597a;
}

.frow.head span {
  border-right: 1px solid #e2e2e2;
}

.frow.head span:nth-child(2),
.frow.head span:nth-child(3) {
  padding-left: 6px;
  text-align: left;
}

.rule {
  height: 1px;
  width: 617px;
  margin: 18px 0 14px;
  background: #e2e2e2;
}

.frow.picked {
  height: 22px;
  line-height: 22px;
  background: #d9d9d9;
}

.second-rule {
  margin: 16px 0 14px;
}

.h-scroll {
  height: 15px;
  margin-top: auto;
  background: #f0f0f0;
  display: flex;
  align-items: center;
  padding: 0 3px 0 2px;
  color: #444;
}

.h-thumb {
  height: 15px;
  flex: 1;
  margin: 0 4px 0 3px;
  background: #cdcdcd;
}

.status {
  height: 24px;
  display: flex;
  align-items: center;
  padding-left: 14px;
  gap: 21px;
  color: #34496b;
  letter-spacing: -0.2px;
}

.view-btn {
  margin-right: 8px;
}

.view-btn svg {
  width: 14px;
  height: 12px;
}

.view-btn.on {
  width: 22px;
  height: 23px;
  margin: 0 -17px 0 auto;
  padding: 4px 2px;
  background: #cdeafa;
  border: 1px solid #5fb6df;
}

.view-btn.on svg {
  width: 16px;
  height: 14px;
}

/* password dialog */

.dialog {
  position: absolute;
  left: 474px;
  top: 152px;
  width: 332px;
  height: 373px;
  background: #f0f0f0;
  border: 1px solid #6a6a6a;
  box-shadow: 0 3px 12px rgba(0, 0, 0, 0.2);
  color: #111;
  font-size: 11px;
  letter-spacing: -0.3px;
}

.dlg-title {
  height: 25px;
  background: #fff;
  display: flex;
  align-items: center;
  padding: 0 9px 0 3px;
  font-size: 11.5px;
  letter-spacing: -0.25px;
}

.dlg-title span {
  padding-bottom: 1px;
}

.dlg-title svg {
  width: 16px;
  height: 16px;
  margin-right: 5px;
}

.dlg-title .dlg-close {
  width: 12px;
  height: 12px;
  margin: 0 0 0 auto;
}

.dlg-msg {
  height: 68px;
  padding-top: 13px;
  margin-right: -2px;
}

.dlg-msg p {
  margin: 0;
  line-height: 14.5px;
  white-space: nowrap;
  display: flex;
  justify-content: center;
}

.dlg-msg .m1 {
  letter-spacing: -0.27px;
}

.dlg-msg .m2 {
  letter-spacing: -0.2px;
}

.dlg-msg .m3 {
  letter-spacing: -0.03px;
}

.fieldset {
  width: 315px;
  height: 234px;
  margin-left: 8px;
  border: 1px solid #dcdcdc;
  padding: 9px;
}

.fieldset label {
  display: block;
  line-height: 18px;
  margin-left: -1px;
}

.combo {
  width: 294px;
  height: 21px;
  margin-top: 2px;
  border: 1px solid #1f73b7;
  background: #fff;
  display: flex;
  align-items: center;
  justify-content: space-between;
  padding: 0 2px 0 5px;
}

.combo i {
  width: 1px;
  height: 13px;
  background: #000;
}

.combo svg {
  width: 12px;
  height: 12px;
}

.check {
  height: 16px;
  margin-top: 61px;
  display: flex;
  align-items: center;
}

.check i {
  width: 13px;
  height: 13px;
  margin-right: 2px;
  border: 1px solid #333;
  background: #fff;
}

.check.disabled {
  margin-top: 46px;
  color: #838383;
}

.check.disabled i {
  border-color: #ccc;
}

.btn {
  width: 94px;
  height: 21px;
  background: #e1e1e1;
  border: 1px solid #adadad;
  text-align: center;
  line-height: 20px;
}

.btn.wide {
  width: 292px;
  margin: 8px 0 0 1px;
  padding-right: 3px;
}

.btn.primary {
  border: 2px solid #0078d7;
  line-height: 18px;
}

.dlg-buttons {
  display: flex;
  gap: 15.5px;
  margin: 13px 8px 0 9px;
}

/* watermark */

.watermark {
  position: absolute;
  left: 1034px;
  top: 606px;
  width: 204px;
  height: 70px;
  filter: drop-shadow(0 0 2px rgba(0, 0, 0, 0.35));
}

.mark {
  fill: rgba(255, 255, 255, 0.6);
  stroke: rgba(255, 255, 255, 0.8);
  stroke-width: 1px;
  fill-rule: evenodd;
  font-family: Roboto, sans-serif;
  font-size: 49px;
  font-weight: 500;
}

/* taskbar */

.taskbar {
  height: 40px;
  display: flex;
  align-items: center;
  background: linear-gradient(90deg, #01171f, #010a1a);
}

.start {
  width: 16px;
  height: 16px;
  margin: 0 16px;
}

.tb-search {
  width: 288px;
  height: 40px;
  background: #f2f2f2;
  border: 1px solid #ccc;
  display: flex;
  align-items: center;
  padding-left: 11px;
  font-size: 14px;
  letter-spacing: -0.05px;
  color: #333;
}

.lens {
  width: 18px;
  height: 20px;
  margin-right: 10px;
}

.flowers {
  width: 80px;
  height: 38px;
  margin-left: auto;
}

.taskview {
  width: 16px;
  height: 18px;
  margin: 0 16px;
}

.app {
  width: 48px;
  height: 40px;
  margin-left: 1px;
  display: flex;
  align-items: center;
  justify-content: center;
}

.app svg {
  width: 24px;
  height: 24px;
}

.edge {
  margin-left: 3px;
}

.app.open {
  background: linear-gradient(#76b9ed, #76b9ed) 50% 100% / 40px 3px no-repeat;
}

.app.current {
  background: linear-gradient(#76b9ed, #76b9ed) 0 100% / 48px 3px no-repeat #3b474e;
}

.tray {
  margin-left: auto;
  display: flex;
  align-items: center;
  color: #fff;
}

.tr1 {
  width: 12px;
  height: 8px;
  margin-right: 12px;
}

.tr2 {
  width: 14px;
  height: 18px;
  margin-right: 8px;
}

.tr3 {
  width: 18px;
  height: 16px;
  margin-right: 6px;
}

.tr4 {
  width: 18px;
  height: 16px;
}

.clock {
  width: 70px;
  text-align: center;
  font-size: 11.5px;
  line-height: 18px;
  letter-spacing: -0.2px;
}

.tr5 {
  width: 18px;
  height: 17px;
  margin: 2px 24px 0 8px;
}
```
